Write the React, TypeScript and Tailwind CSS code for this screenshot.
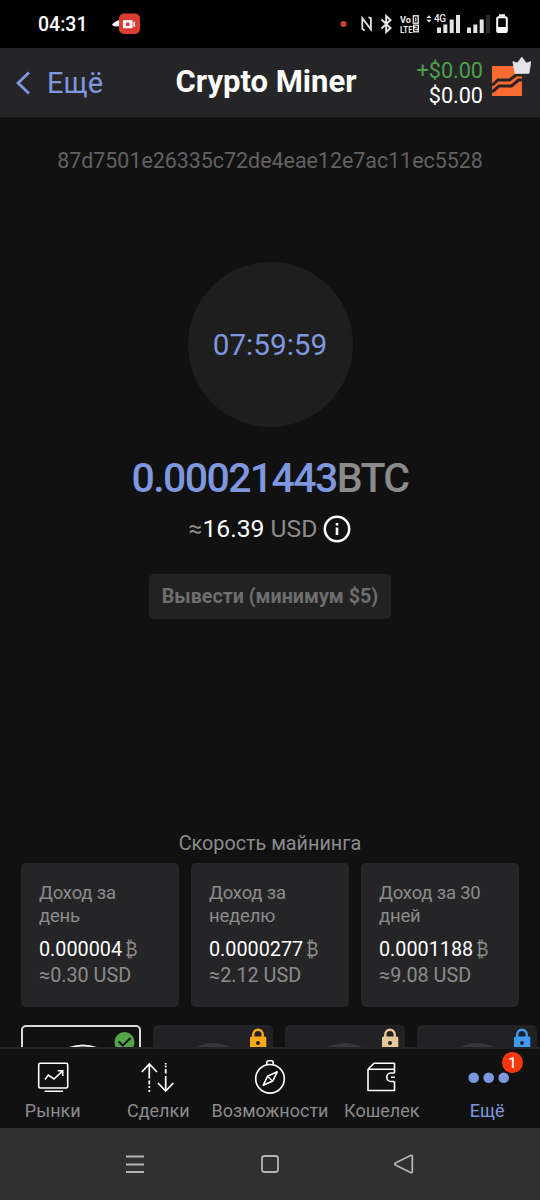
import React from "react";

const incomes = [
  { label: "Доход за день", btc: "0.000004", usd: "≈0.30 USD" },
  { label: "Доход за неделю", btc: "0.0000277", usd: "≈2.12 USD" },
  { label: "Доход за 30 дней", btc: "0.0001188", usd: "≈9.08 USD" },
];

const lockedPlans = ["#fba919", "#e8c898", "#3f9cf5"];

const StatusBar = () => {
  return (
    <div className="flex h-12 shrink-0 items-center bg-black pl-[38px] text-white">
      <span className="w-[74px] pt-0.5 text-[19.5px] leading-6 font-medium">04:31</span>
      <svg width="28" height="22" viewBox="0 0 28 22">
        <path d="M0 11.5Q4 7 9 7V15Q7 12.5 4 13.5Q1 13.5 0 11.5Z" fill="#fff" />
        <rect x="7" y="0.5" width="21" height="20.5" rx="5" fill="#dc3d33" />
        <rect x="11" y="7.2" width="9.5" height="8" fill="#fff" />
        <rect x="14" y="9.5" width="3.5" height="3.5" fill="#dc3d33" />
        <path d="M21.3 9.5L23 8.3V14.2L21.3 13Z" fill="#fff" />
      </svg>
      {/* notification and radio icons */}
      <svg className="ml-[200px]" width="168" height="24" viewBox="340 12 168 24">
        <circle cx="343.5" cy="24" r="3" fill="#d2413a" />
        <path
          d="M364.8 30.6L362.3 29V18.2L370.9 29.3V18.2L368.5 17.3"
          fill="none"
          stroke="#e4e4e4"
          strokeWidth="1.8"
        />
        <path
          d="M381.5 19.5L390.5 28L386.2 32V16L390.5 20L381.5 28.5"
          fill="none"
          stroke="#e4e4e4"
          strokeWidth="2"
        />
        <text x="400" y="22.5" fontSize="9" fontWeight="700" fill="#e8e8e8" textLength="11" lengthAdjust="spacingAndGlyphs">Vo</text>
        <text x="400" y="32.5" fontSize="9" fontWeight="700" fill="#e8e8e8" textLength="12.5" lengthAdjust="spacingAndGlyphs">LTE</text>
        <rect x="413.4" y="15.8" width="4.8" height="7.4" fill="none" stroke="#e8e8e8" strokeWidth="1.4" />
        <path d="M415.8 17.5V21.5" stroke="#e8e8e8" strokeWidth="1.2" />
        <rect x="413" y="24.5" width="6" height="8" fill="#e8e8e8" />
        <path d="M414.5 26.3H417.2V28.5H414.9V30.7H417.6" fill="none" stroke="#000" strokeWidth="0.9" />
        <path d="M426.3 18L429 15.2L431.7 18ZM426.3 19.8L429 22.4L431.7 19.8Z" fill="#e4e4e4" />
        <text x="434" y="22" fontSize="10" fontWeight="500" fill="#e8e8e8" textLength="12">4G</text>
        <g fill="#e4e4e4">
          <rect x="437" y="27.5" width="4" height="5.5" />
          <rect x="443.3" y="24.5" width="4" height="8.5" />
          <rect x="449.7" y="19.5" width="4" height="13.5" />
          <rect x="456" y="15" width="4" height="18" />
          <rect x="467" y="27.5" width="4" height="5.5" />
          <rect x="473.3" y="24.5" width="4" height="8.5" />
          <rect x="479.7" y="19.5" width="4" height="13.5" />
        </g>
        <rect x="486" y="15" width="4" height="18" fill="#2c2c2c" />
        <path d="M499 14.3H505V16.5H499Z" fill="#fff" />
        <rect x="497.2" y="17.2" width="9.6" height="14.8" rx="1.6" fill="none" stroke="#fff" strokeWidth="2" />
        <rect x="497" y="27" width="10" height="5" fill="#fff" />
      </svg>
    </div>
  );
};

const Header = () => {
  return (
    <div className="grid h-[70px] shrink-0 grid-cols-[157px_218px_165px] items-center border-b border-[#1b1b1c] bg-[#252527]">
      <div className="flex items-center gap-[17px] pl-4 text-[#7e97df]">
        <svg width="14" height="24" viewBox="0 0 14 24" fill="none" stroke="currentColor" strokeWidth="2.8">
          <path d="M13 1.5L2 12L13 22.5" />
        </svg>
        <span className="text-[29px] leading-8">Ещё</span>
      </div>
      <h1 className="pb-0.5 text-center text-[31px] leading-9 font-bold whitespace-nowrap text-white">Crypto Miner</h1>
      <div className="flex items-center justify-end gap-[9px] pr-[9px]">
        <div className="text-right text-[21.6px] leading-[25px]">
          <p className="text-[#4fa04a]">+$0.00</p>
          <p className="text-white">$0.00</p>
        </div>
        <svg className="mb-3" width="39" height="42" viewBox="492 56 39 42">
          <rect x="492" y="66" width="30" height="30" fill="#fb6a30" />
          <path
            d="M492 85.5L498 80H509.5L516 75H522M492 92L499 86H511.5L518.5 80H522"
            fill="none"
            stroke="#2a2325"
            strokeWidth="3"
          />
          <path
            d="M512.8 61.5L517.3 63L521.8 57L526.3 63L531 61.5L529 73.5H515Z"
            fill="#e4e4e6"
            strokeLinejoin="round"
            stroke="#e4e4e6"
            strokeWidth="0.6"
          />
        </svg>
      </div>
    </div>
  );
};

const IncomeCard = ({ label, btc, usd }: { label: string; btc: string; usd: string }) => {
  return (
    <div className="h-36 rounded-[5px] bg-[#252527] px-[18px] pt-[19px] text-[#8b8b8c]">
      <p className="h-[46px] text-[18.5px] leading-[23px] tracking-[-0.2px]">{label}</p>
      <p className="mt-[9px] flex text-[19.8px] leading-[26px] whitespace-nowrap">
        <span className="text-white">{btc}</span>
        <span className="ml-[3px] origin-left scale-x-85">₿</span>
      </p>
      <p className="text-[19.8px] leading-[26px]">{usd}</p>
    </div>
  );
};

const PlanRow = () => {
  return (
    <div className="mt-[18px] flex h-[22px] w-[519px] gap-3 overflow-hidden self-end">
      <div className="flex h-[140px] w-[120px] shrink-0 rounded-[5px] border-2 border-[#dcd8dc] bg-[#111]">
        <svg width="116" height="22" viewBox="23 1027 116 22">
          <circle cx="83" cy="1084.5" r="40" fill="#eee" />
          <circle cx="83" cy="1088.5" r="42" fill="#1c1c1d" />
          <circle cx="124.5" cy="1042" r="10" fill="#54a44c" />
          <path d="M118.5 1041.5L122.8 1045.5L130.5 1038" fill="none" stroke="#111" strokeWidth="2" />
        </svg>
      </div>
      {lockedPlans.map((color) => (
        <div key={color} className="h-[140px] w-[120px] shrink-0 rounded-[5px] bg-[#222224]">
          <svg width="120" height="24" viewBox="153 1025 120 24">
            <circle cx="213" cy="1081" r="38" fill="#38383a" />
            <path d="M253.3 1037V1034.5A4.7 4.7 0 0 1 262.7 1034.5V1037" fill="none" stroke={color} strokeWidth="2.4" />
            <rect x="250" y="1036.5" width="16.3" height="14" rx="1.5" fill={color} />
            <circle cx="258" cy="1043" r="2" fill="#222224" />
          </svg>
        </div>
      ))}
    </div>
  );
};

const TabBar = () => {
  return (
    <nav className="grid h-[81px] shrink-0 grid-cols-[1fr_1fr_118px_1fr_1fr] border-t-2 border-[#242426] bg-[#111] pt-[11px] text-[18px] leading-6 text-[#8b8b8c]">
      <div className="flex flex-col items-center gap-[5px]">
        <svg width="32" height="34" viewBox="37 1060 32 34" fill="none" stroke="#fff" strokeWidth="1.6">
          <rect x="38.7" y="1063.3" width="29" height="24.7" rx="1.5" />
          <path d="M44.5 1091.3H63M45 1079.5L48.3 1075L54 1079L62 1071.5M57.7 1070.8H62.7V1076" />
        </svg>
        <span>Рынки</span>
      </div>
      <div className="flex flex-col items-center gap-[5px]">
        <svg width="36" height="34" viewBox="140 1060 36 34" fill="none" stroke="#fff" strokeWidth="1.7">
          <path d="M141.8 1072L149.3 1064L157 1072M149.3 1064V1078.5M149.3 1080.5V1084.5M149.3 1086V1088M149.3 1090V1092" />
          <path d="M158 1083L165.7 1091L173.3 1083M165.7 1091V1076M165.7 1073.5V1069M165.7 1067.5V1065.5M165.7 1064.5V1063" />
        </svg>
        <span>Сделки</span>
      </div>
      <div className="flex flex-col items-center gap-[5px]">
        <svg width="34" height="36" viewBox="253 1060 34 36" className="-mb-0.5" fill="none" stroke="#fff" strokeWidth="1.6">
          <circle cx="270" cy="1078.8" r="14.3" />
          <path d="M266.8 1064.5V1062.5Q266.8 1060.8 268.5 1060.8H271.5Q273.2 1060.8 273.2 1062.5V1064.5" />
          <path d="M277.2 1071.8L272.8 1081L263.3 1085.2L267.5 1076.3Z" strokeLinejoin="round" />
          <path d="M268 1076.8L272.3 1080.7" strokeWidth="1.2" />
        </svg>
        <span>Возможности</span>
      </div>
      <div className="flex flex-col items-center gap-[5px]">
        <svg width="30" height="34" viewBox="367 1060 30 34" fill="none" stroke="#fff" strokeWidth="1.6" strokeLinejoin="round">
          <path d="M368 1069.3L374 1063.3H394.5V1073M368 1069.3H394.5M368 1069.3V1090.5H394.5V1081.5" />
          <path d="M394.5 1073H391A4.2 4.2 0 0 0 391 1081.5H394.5M391 1077.3H394.8" />
        </svg>
        <span>Кошелек</span>
      </div>
      <div className="relative flex flex-col items-center gap-[5px] text-[#7e97df]">
        <svg className="ml-[3px]" width="44" height="34" viewBox="466 1060 44 34" fill="#7e97df">
          <circle cx="472.7" cy="1077.7" r="5.3" />
          <circle cx="487.7" cy="1077.7" r="5.3" />
          <circle cx="502.7" cy="1077.7" r="5.3" />
        </svg>
        <span>Ещё</span>
        <span className="absolute -top-2 right-[17px] flex size-[21px] items-center justify-center rounded-full bg-[#f9370c] text-[14px] leading-none font-medium text-white">
          1
        </span>
      </div>
    </nav>
  );
};

const SystemNav = () => {
  return (
    <div className="flex h-[72px] shrink-0 justify-center bg-[#303030]">
      <svg width="300" height="72" viewBox="120 1128 300 72" fill="none" stroke="#b4b4b4" strokeWidth="1.8">
        <path d="M126 1156.5H144M126 1164.5H144M126 1172H144" />
        <rect x="262" y="1156" width="16" height="16" rx="2.5" />
        <path d="M395.5 1163L410.5 1155.5Q412.3 1154.8 412.3 1157V1171Q412.3 1173.5 410.5 1172.5L395.5 1165Q394 1164 395.5 1163Z" />
      </svg>
    </div>
  );
};

const App = () => {
  return (
    <div className="flex h-[1200px] w-[540px] flex-col overflow-hidden bg-[#111] font-['Roboto',sans-serif]">
      <StatusBar />
      <Header />
      <main className="flex h-[929px] shrink-0 flex-col items-center overflow-hidden pt-[30px]">
        <p className="text-[21.4px] leading-[25px] text-[#616161]">87d7501e26335c72de4eae12e7ac11ec5528</p>
        <div className="mt-[89px] flex size-[165px] shrink-0 items-center justify-center rounded-full bg-[#1e1e1e] pt-0.5 text-[29.7px] text-[#7e97df]">
          07:59:59
        </div>
        <p className="mt-[27px] text-[41px] leading-[48px] font-medium tracking-[-1.6px] text-[#7e97df]">
          0.00021443<span className="text-[#8b8b8c]">BTC</span>
        </p>
        <div className="mt-[11px] flex h-8 items-center text-[24.7px] text-[#8b8b8c]">
          <span>
            ≈<span className="text-white">16.39</span> USD
          </span>
          <svg className="ml-1.5" width="28" height="28" viewBox="0 0 28 28">
            <circle cx="14" cy="14" r="12.2" fill="none" stroke="#fff" strokeWidth="2.5" />
            <path d="M14 12.5V20M14 8V10.6" stroke="#fff" strokeWidth="2.6" />
          </svg>
        </div>
        <button className="mt-[29px] h-[45px] w-[242px] shrink-0 rounded-[5px] bg-[#222] pt-px text-[19.7px] font-bold whitespace-nowrap text-[#6e6e6e]">
          Вывести (минимум $5)
        </button>
        <p className="mt-[213px] text-[19.8px] leading-6 text-[#8b8b8c]">Скорость майнинга</p>
        <div className="mt-[7px] grid w-[498px] grid-cols-3 gap-3">
          {incomes.map((income) => (
            <IncomeCard key={income.label} {...income} />
          ))}
        </div>
        <PlanRow />
      </main>
      <TabBar />
      <SystemNav />
    </div>
  );
};

export default App;
